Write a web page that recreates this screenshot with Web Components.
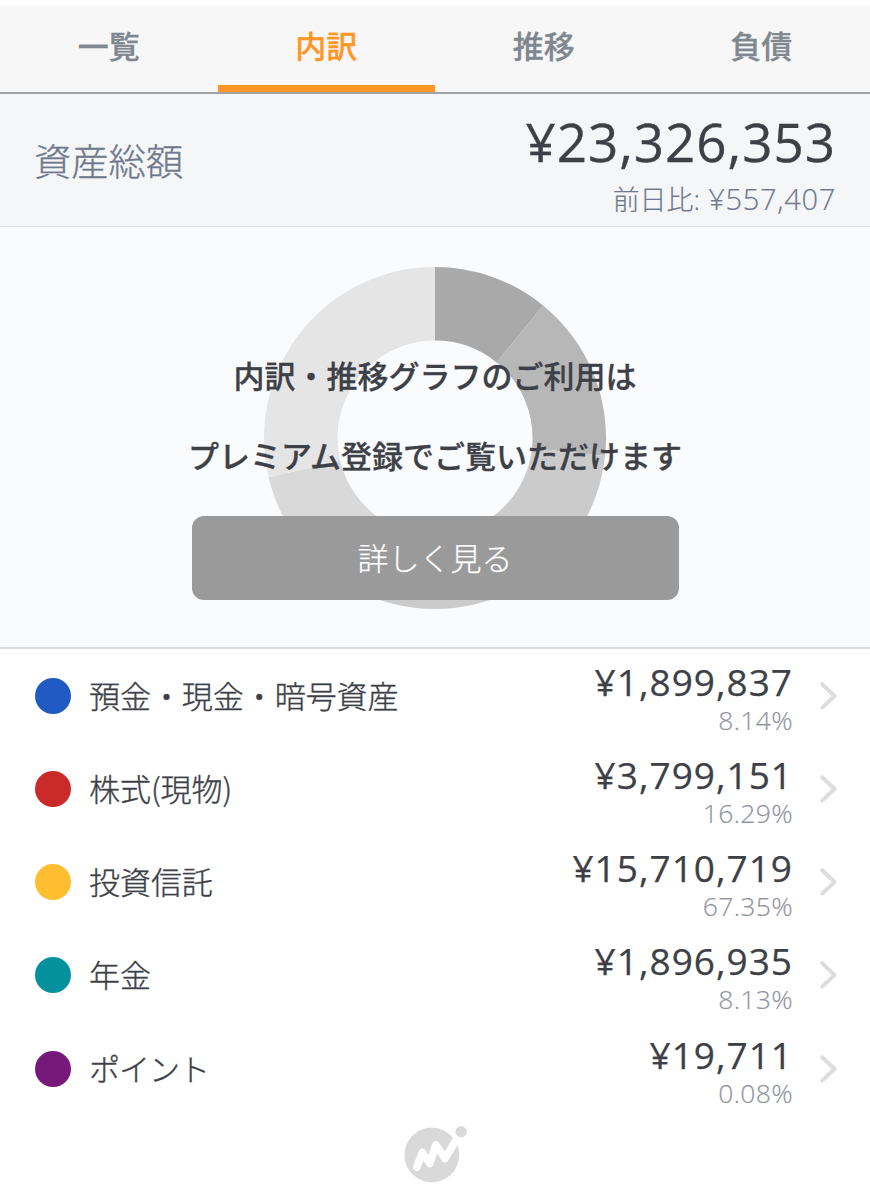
<!DOCTYPE html>
<html lang="ja">
<head>
<meta charset="utf-8">
<title>資産内訳</title>
<style>
  html, body { margin: 0; background: #fff; }
  body { font-family: "Noto Sans CJK JP", sans-serif; color: #3d4147; }
</style>
</head>
<body>
<asset-page></asset-page>
<script>
const define = (name, html, init) => {
  customElements.define(name, class extends HTMLElement {
    constructor() {
      super();
      this.attachShadow({ mode: 'open' }).innerHTML = html;
    }
    connectedCallback() { if (init) init(this, this.shadowRoot); }
  });
};

define('tab-item', `
  <style>
    :host { flex: 1; height: 86px; box-sizing: border-box; display: flex; justify-content: center;
      font-size: 31px; font-weight: 500; line-height: 46px; padding-top: 16px; color: #7f8791;
      border-bottom: 7px solid transparent; -webkit-text-stroke: .3px currentColor; }
    :host([active]) { color: #ff9726; border-bottom-color: #ff9726; }
  </style><slot></slot>`);

define('tab-bar', `
  <style>
    :host { display: flex; margin-top: 6px; background: #f7f7f7; border-bottom: 2px solid #a0a2a6; }
  </style><slot></slot>`);

define('total-summary', `
  <style>
    :host { display: flex; justify-content: space-between; height: 133px; box-sizing: border-box;
      padding: 0 35px 0 34px; background: #f5f6f8; border-bottom: 1px solid #dddfe2; }
    .title { font-size: 37.3px; line-height: 56px; font-weight: 300; color: #70798c; margin-top: 38px;
      -webkit-text-stroke: .35px currentColor; }
    .side { display: flex; flex-direction: column; align-items: flex-end; }
    .total { font: 400 53px/60px "Open Sans", sans-serif; letter-spacing: .95px; margin: 18px -1px 0 0;
      -webkit-text-stroke: .3px currentColor; }
    .diff { font: 300 29px/40px "Open Sans", "Noto Sans CJK JP", sans-serif; color: #70798c;
      margin: 7px -1px 0 0; white-space: nowrap; letter-spacing: .7px; -webkit-text-stroke: .2px currentColor; }
    ::slotted(span) { white-space: nowrap; }
  </style>
  <div class="title"><slot name="title"></slot></div>
  <div class="side">
    <div class="total"><slot name="total"></slot></div>
    <div class="diff"><slot name="diff"></slot></div>
  </div>`);

define('donut-chart', `
  <style>:host { display: block; width: 342px; height: 342px; } svg { display: block; }</style>
  <svg width="342" height="342" viewBox="-171 -171 342 342"></svg>`,
  (el, root) => {
    const slices = [[0, 39.2, '#a9a9a9'], [39.2, 96, '#b7b7b7'], [96, 208, '#cbcbcb'],
                    [208, 256.7, '#d9d9d9'], [256.7, 360, '#e5e5e5']];
    const at = (r, a) => {
      const t = a * Math.PI / 180;
      return (r * Math.sin(t)).toFixed(2) + ' ' + (-r * Math.cos(t)).toFixed(2);
    };
    root.querySelector('svg').innerHTML = slices.map(([a, b, fill]) =>
      `<path fill="${fill}" d="M${at(171, a)}A171 171 0 0 1 ${at(171, b)}L${at(97.5, b)}A97.5 97.5 0 0 0 ${at(97.5, a)}Z"/>`).join('');
  });

define('premium-panel', `
  <style>
    :host { display: grid; height: 422px; box-sizing: border-box; justify-items: center; align-items: start;
      background: #fafbfd; border-bottom: 2px solid #dcdde0; }
    donut-chart { grid-area: 1 / 1; margin-top: 40px; }
    .copy { grid-area: 1 / 1; display: flex; flex-direction: column; align-items: center;
      z-index: 1; padding-top: 108px; }
    p { margin: 0; font-size: 31px; line-height: 80px; font-weight: 500; white-space: nowrap;
      -webkit-text-stroke: .3px currentColor; }
    button { width: 487px; height: 84px; margin-top: 21px; border: 0; border-radius: 12px; padding: 0 0 2px;
      background: #9a9a9a; color: #fff; font: 300 31px/82px "Noto Sans CJK JP", sans-serif;
      -webkit-text-stroke: .25px currentColor; }
  </style>
  <donut-chart></donut-chart>
  <div class="copy">
    <p><slot name="line1"></slot></p>
    <p><slot name="line2"></slot></p>
    <button><slot name="action"></slot></button>
  </div>`);

define('asset-row', `
  <style>
    :host { display: flex; height: 93.25px; align-items: center; padding: 0 32px 0 35px; }
    .dot { width: 36px; height: 36px; border-radius: 50%; background: var(--dot); margin-right: 18px; }
    .name { font-size: 31px; line-height: 46px; font-weight: 300; flex: 1; padding-bottom: 2px;
      letter-spacing: var(--tracking, -.05px); -webkit-text-stroke: .35px currentColor; }
    .values { display: flex; flex-direction: column; align-items: flex-end; margin-right: 26px; padding-top: 4px; }
    .amount { font: 400 37px/44px "Open Sans", sans-serif; letter-spacing: 1px; -webkit-text-stroke: .25px currentColor; }
    .rate { font: 300 26.5px/32px "Open Sans", sans-serif; letter-spacing: .35px; color: #91959f;
      -webkit-text-stroke: .2px currentColor; }
    svg { display: block; }
  </style>
  <span class="dot"></span>
  <span class="name"><slot></slot></span>
  <div class="values">
    <span class="amount"><slot name="amount"></slot></span>
    <span class="rate"><slot name="rate"></slot></span>
  </div>
  <svg width="19" height="30" viewBox="0 0 19 30"><path d="M3.2 3.2L15.6 15L3.2 26.6" fill="none"
    stroke="#dcdddf" stroke-width="4" stroke-linecap="round" stroke-linejoin="round"/></svg>`);

define('brand-mark', `
  <style>:host { display: flex; justify-content: center; padding-top: 9px; } svg { display: block; }</style>
  <svg width="66" height="60" viewBox="402 1124 66 60">
    <circle cx="431.8" cy="1155" r="27.4" fill="#d9d9d9"/>
    <path d="M416.8 1167.2L422.3 1152.5L429.8 1163.5L435.8 1144.8L445 1158.5L457 1138.5" fill="none"
      stroke="#fff" stroke-width="7.6" stroke-linecap="round" stroke-linejoin="round"/>
    <circle cx="461.1" cy="1131.8" r="5.7" fill="#d9d9d9"/>
  </svg>`);

define('asset-page', `
  <style>
    :host { display: block; width: 870px; height: 1200px; overflow: hidden; background: #fff; }
    .label { font-size: 27px; letter-spacing: 0; }
  </style>
  <tab-bar>
    <tab-item>一覧</tab-item><tab-item active>内訳</tab-item><tab-item>推移</tab-item><tab-item>負債</tab-item>
  </tab-bar>
  <total-summary>
    <span slot="title">資産総額</span>
    <span slot="total">¥23,326,353</span>
    <span slot="diff"><span class="label">前日比:</span> ¥557,407</span>
  </total-summary>
  <premium-panel>
    <span slot="line1">内訳・推移グラフのご利用は</span>
    <span slot="line2">プレミアム登録でご覧いただけます</span>
    <span slot="action">詳しく見る</span>
  </premium-panel>
  <asset-row style="--dot:#205bc3">預金・現金・暗号資産<span slot="amount">¥1,899,837</span><span slot="rate">8.14%</span></asset-row>
  <asset-row style="--dot:#cb2a2b">株式(現物)<span slot="amount">¥3,799,151</span><span slot="rate">16.29%</span></asset-row>
  <asset-row style="--dot:#ffbe30">投資信託<span slot="amount">¥15,710,719</span><span slot="rate">67.35%</span></asset-row>
  <asset-row style="--dot:#03929d">年金<span slot="amount">¥1,896,935</span><span slot="rate">8.13%</span></asset-row>
  <asset-row style="--dot:#77187b;--tracking:-1px">ポイント<span slot="amount">¥19,711</span><span slot="rate">0.08%</span></asset-row>
  <brand-mark></brand-mark>`);
</script>
</body>
</html>
